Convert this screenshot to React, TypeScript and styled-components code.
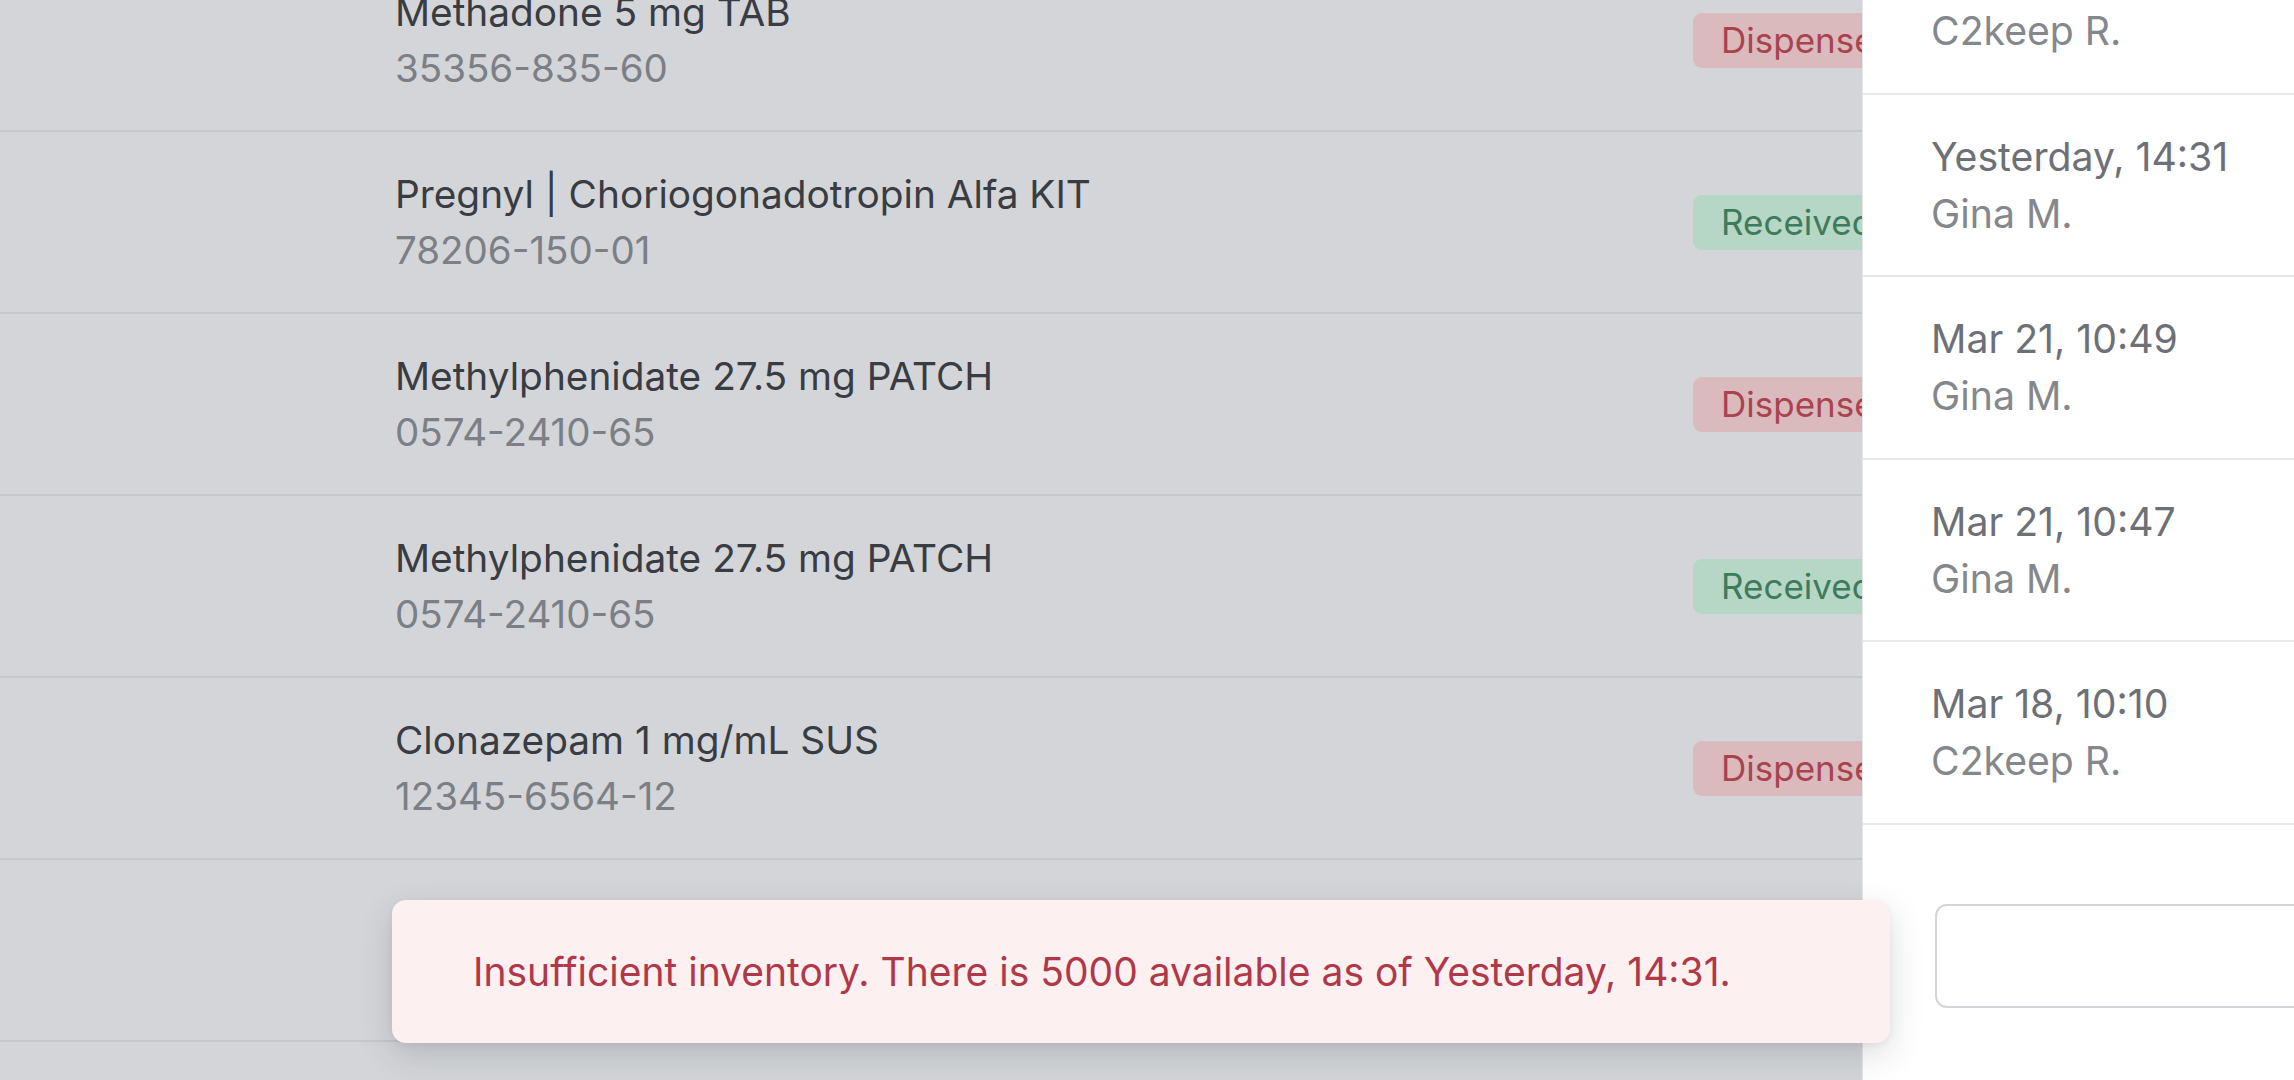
import React from "react";
import styled, { createGlobalStyle } from "styled-components";

const GlobalStyle = createGlobalStyle`
  html, body {
    margin: 0;
    padding: 0;
    height: 100%;
    overflow: hidden;
  }
  body {
    font-family: Inter, "Noto Sans", "Liberation Sans", sans-serif;
    background: #d3d5d8;
  }
  * {
    box-sizing: border-box;
  }
`;

type Status = "dispensed" | "received";

interface Transaction {
  name: string;
  ndc: string;
  status: Status;
}

interface HistoryEntry {
  when: string;
  who: string;
}

const transactions: Transaction[] = [
  { name: "Methadone 5 mg TAB", ndc: "35356-835-60", status: "dispensed" },
  { name: "Pregnyl | Choriogonadotropin Alfa KIT", ndc: "78206-150-01", status: "received" },
  { name: "Methylphenidate 27.5 mg PATCH", ndc: "0574-2410-65", status: "dispensed" },
  { name: "Methylphenidate 27.5 mg PATCH", ndc: "0574-2410-65", status: "received" },
  { name: "Clonazepam 1 mg/mL SUS", ndc: "12345-6564-12", status: "dispensed" },
];

const history: HistoryEntry[] = [
  { when: "Yesterday, 16:02", who: "C2keep R." },
  { when: "Yesterday, 14:31", who: "Gina M." },
  { when: "Mar 21, 10:49", who: "Gina M." },
  { when: "Mar 21, 10:47", who: "Gina M." },
  { when: "Mar 18, 10:10", who: "C2keep R." },
];

const Page = styled.div`
  position: relative;
  width: 100vw;
  height: 100vh;
  overflow: hidden;
  background: #d3d5d8;
`;

const List = styled.div`
  display: flex;
  flex-direction: column;
  margin-top: -50px;
`;

const Row = styled.div`
  display: grid;
  grid-template-columns: 1298px 1fr;
  align-items: center;
  height: 182px;
  padding-left: 395px;
  border-bottom: 2px solid #c4c7cb;
`;

const Drug = styled.div`
  display: flex;
  flex-direction: column;
  line-height: 56px;
  white-space: nowrap;
`;

const DrugName = styled.span`
  font-size: 38.8px;
  color: #393c42;
`;

const Ndc = styled.span`
  font-size: 38.5px;
  color: #7c7f85;
`;

const Badge = styled.span<{ $status: Status }>`
  justify-self: start;
  display: inline-flex;
  align-items: center;
  height: 55px;
  padding: 0 28px;
  border-radius: 9px;
  font-size: 35px;
  white-space: nowrap;
  background: ${(p) => (p.$status === "received" ? "#b6d6c6" : "#dbbabd")};
  color: ${(p) => (p.$status === "received" ? "#3e7b5c" : "#a9434e")};
`;

const Drawer = styled.aside`
  position: absolute;
  top: 0;
  right: 0;
  width: 432px;
  height: 100%;
  background: #ffffff;
  border-left: 1px solid #e4e6e8;
  display: flex;
  flex-direction: column;
  overflow: hidden;
`;

const Entries = styled.div`
  display: flex;
  flex-direction: column;
  margin-top: -88px;
`;

const Entry = styled.div`
  display: flex;
  flex-direction: column;
  justify-content: center;
  height: 182.5px;
  padding-left: 68px;
  border-bottom: 2px solid #e8e9eb;
  font-size: 39.2px;
  line-height: 57px;
  white-space: nowrap;
`;

const When = styled.span`
  color: #6d7076;
`;

const Who = styled.span`
  color: #84878c;
`;

const Footer = styled.div`
  padding: 79px 0 0 72px;
  margin-right: -60px;
`;

const Input = styled.input`
  display: block;
  width: 100%;
  height: 104px;
  border: 2px solid #d3d5d8;
  border-radius: 12px;
  background: #ffffff;
  font: inherit;
  font-size: 34px;
  padding: 0 24px;
  outline: none;
`;

const Toast = styled.div`
  position: absolute;
  left: 392px;
  bottom: 37px;
  width: 1498px;
  height: 143px;
  display: flex;
  align-items: center;
  padding-left: 81px;
  border-radius: 14px;
  background: #fcf0f1;
  box-shadow: 0 12px 34px rgba(40, 44, 52, 0.16), 0 2px 6px rgba(40, 44, 52, 0.06);
  color: #b03848;
  font-size: 39px;
  white-space: nowrap;
`;

export default function App() {
  return (
    <>
      <GlobalStyle />
      <Page>
        <List>
          {transactions.map((t, i) => (
            <Row key={i}>
              <Drug>
                <DrugName>{t.name}</DrugName>
                <Ndc>{t.ndc}</Ndc>
              </Drug>
              <Badge $status={t.status}>
                {t.status === "received" ? "Received" : "Dispensed"}
              </Badge>
            </Row>
          ))}
          <Row />
          <Row />
        </List>
        <Drawer>
          <Entries>
            {history.map((h, i) => (
              <Entry key={i}>
                <When>{h.when}</When>
                <Who>{h.who}</Who>
              </Entry>
            ))}
          </Entries>
          <Footer>
            <Input aria-label="Quantity" />
          </Footer>
        </Drawer>
        <Toast>Insufficient inventory. There is 5000 available as of Yesterday, 14:31.</Toast>
      </Page>
    </>
  );
}
